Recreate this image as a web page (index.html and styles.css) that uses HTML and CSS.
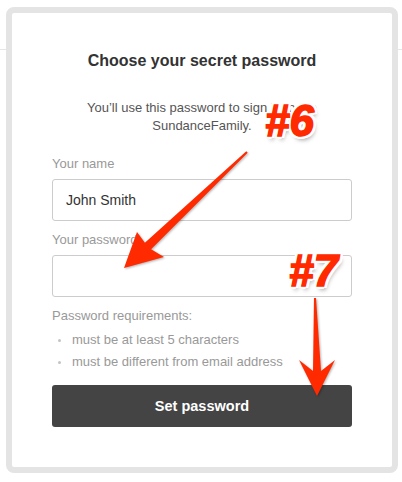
FILE: index.html
```html
<!DOCTYPE html>
<html lang="en">
<head>
  <meta charset="UTF-8">
  <meta name="viewport" content="width=device-width, initial-scale=1.0">
  <title>Choose your secret password</title>
  <link rel="stylesheet" href="styles.css">
</head>
<body>
  <div class="card">
    <div class="card-inner">
      <h1>Choose your secret password</h1>
      <p class="intro">You’ll use this password to sign in to the SundanceFamily.</p>

      <form class="form">
        <label class="field-label" for="name">Your name</label>
        <input class="field" id="name" type="text" value="John Smith">

        <label class="field-label" for="password">Your password</label>
        <input class="field" id="password" type="password">

        <p class="req-title">Password requirements:</p>
        <ul class="req-list">
          <li>must be at least 5 characters</li>
          <li>must be different from email address</li>
        </ul>

        <button class="btn" type="button">Set password</button>
      </form>
    </div>
  </div>

  <!-- annotations drawn over the screenshot -->
  <svg class="arrows" width="402" height="482" viewBox="0 0 402 482">
    <polygon points="246.3,151.3 144.9,242.7 137,232 124,268 164,257 151.1,249.3 247.7,152.7" />
    <polygon points="314,298 313,371 299,360 317,396 335,360 321,371 316,298" />
  </svg>
  <span class="callout callout-6">#6</span>
  <span class="callout callout-7">#7</span>
</body>
</html>
```

FILE: styles.css
```css
:root {
  --text: #333333;
  --muted: #999999;
  --border: #cccccc;
  --frame: #e4e4e4;
  --dark: #444444;
  --red: #ff2a00;
}

* {
  margin: 0;
  padding: 0;
  box-sizing: border-box;
}

body {
  font-family: "Liberation Sans", Arial, Helvetica, sans-serif;
  color: var(--text);
  background: linear-gradient(to bottom, transparent 49px, #e6e6e6 49px, #e6e6e6 50px, transparent 50px) #ffffff;
  width: 402px;
  height: 482px;
  padding: 7px 4px 0 6px;
  position: relative;
  overflow: hidden;
}

.card {
  width: 392px;
  border: 6px solid var(--frame);
  border-radius: 8px;
  background: #ffffff;
}

.card-inner {
  padding: 38px 40px 40px;
}

h1 {
  font-size: 16px;
  line-height: 20px;
  font-weight: bold;
  text-align: center;
  color: var(--text);
}

.intro {
  margin-top: 28px;
  font-size: 13px;
  line-height: 18px;
  text-align: center;
  color: #555555;
}

.form {
  display: flex;
  flex-direction: column;
  margin-top: 20px;
}

.field-label {
  font-size: 13px;
  line-height: 18px;
  color: var(--muted);
  margin-bottom: 6px;
}

.field {
  height: 42px;
  border: 1px solid var(--border);
  border-radius: 3px;
  padding: 0 13px;
  font-family: inherit;
  font-size: 14px;
  color: var(--text);
  background: #ffffff;
  outline: none;
}

.field + .field-label {
  margin-top: 10px;
}

.req-title {
  margin-top: 10px;
  font-size: 13px;
  line-height: 18px;
  color: var(--muted);
}

.req-list {
  list-style: none;
  margin-top: 4px;
}

.req-list li {
  position: relative;
  padding-left: 20px;
  font-size: 13px;
  line-height: 22px;
  color: var(--muted);
}

.req-list li::before {
  content: "";
  position: absolute;
  left: 6px;
  top: 10px;
  width: 3px;
  height: 3px;
  border-radius: 50%;
  background: #c4c4c4;
}

.btn {
  margin-top: 12px;
  height: 42px;
  border: none;
  border-radius: 3px;
  background: var(--dark);
  color: #ffffff;
  font-family: inherit;
  font-size: 14.5px;
  font-weight: bold;
}

.arrows {
  position: absolute;
  left: 0;
  top: 0;
  pointer-events: none;
}

.arrows polygon {
  fill: var(--red);
  filter: drop-shadow(1px 1px 1px rgba(0, 0, 0, 0.3));
}

.callout {
  position: absolute;
  font-size: 44px;
  line-height: 44px;
  font-weight: bold;
  font-style: italic;
  color: var(--red);
  -webkit-text-stroke: 1.5px var(--red);
  text-shadow:
    -3px 0 0 #fff, 3px 0 0 #fff, 0 -3px 0 #fff, 0 3px 0 #fff,
    -3px -2px 0 #fff, 3px -2px 0 #fff, -3px 2px 0 #fff, 3px 2px 0 #fff,
    2px 4px 4px rgba(0, 0, 0, 0.35);
}

.callout-6 {
  left: 265px;
  top: 99px;
}

.callout-7 {
  left: 289px;
  top: 249px;
}
```
